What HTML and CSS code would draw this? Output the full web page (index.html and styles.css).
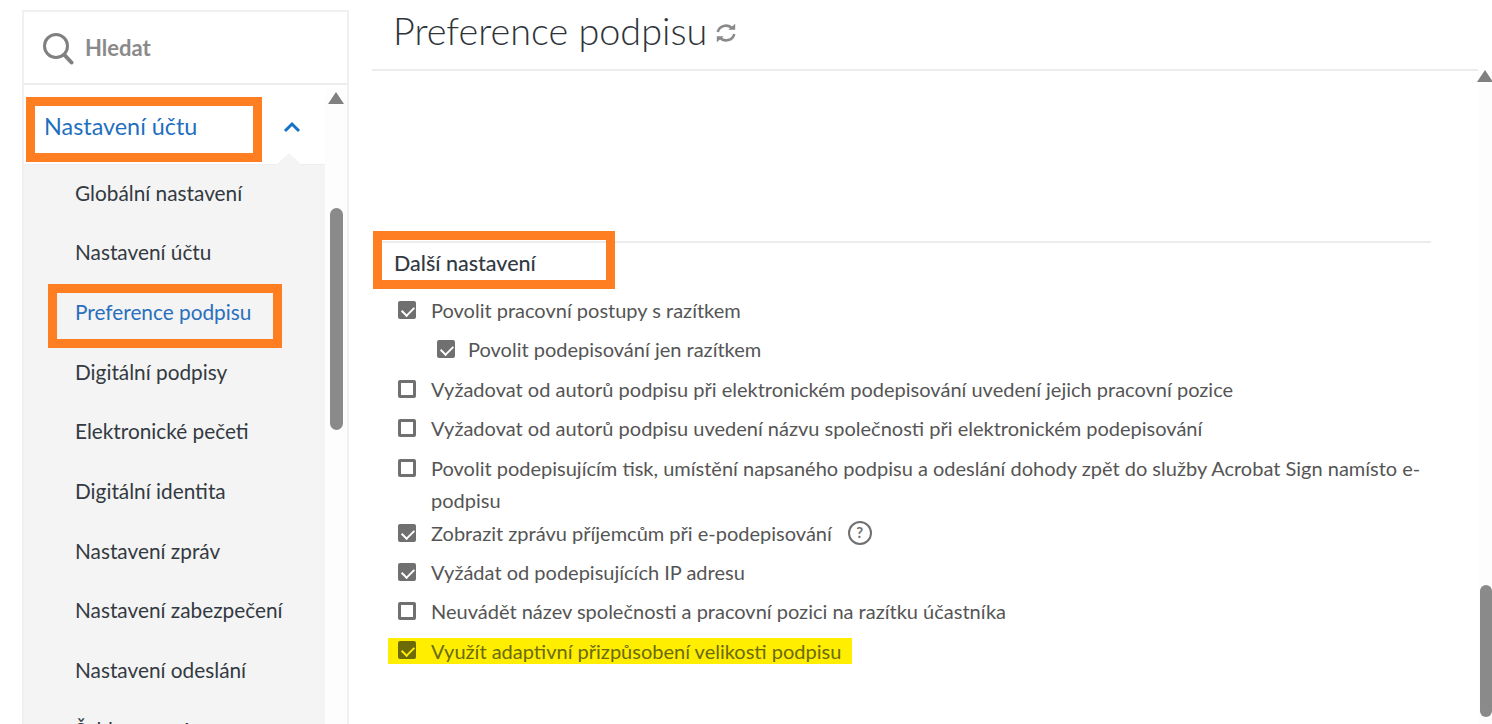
FILE: index.html
```html
<!DOCTYPE html>
<html lang="cs">
<head>
    <meta charset="UTF-8">
    <title>Preference podpisu</title>
    <link rel="stylesheet" href="styles.css">
</head>
<body>
    <aside class="sidebar">
        <div class="search">
            <svg class="search-icon" viewBox="0 0 32 34" fill="none" stroke="#808080">
                <circle cx="14" cy="14" r="11.5" stroke-width="3"/>
                <path d="M22.5 23 L29.5 30.5" stroke-width="4" stroke-linecap="round"/>
            </svg>
            <span>Hledat</span>
        </div>
        <div class="nav-wrap">
            <nav class="nav">
                <div class="nav-head">
                    <span class="nav-title">Nastavení účtu</span>
                    <svg class="chevron" viewBox="0 0 18 12" fill="none" stroke="#1473c8" stroke-width="3">
                        <path d="M2 10 L9 3 L16 10"/>
                    </svg>
                    <span class="mark mark-head"></span>
                </div>
                <ul class="nav-list">
                    <li>Globální nastavení</li>
                    <li>Nastavení účtu</li>
                    <li class="active">Preference podpisu<span class="mark mark-item"></span></li>
                    <li>Digitální podpisy</li>
                    <li>Elektronické pečeti</li>
                    <li>Digitální identita</li>
                    <li>Nastavení zpráv</li>
                    <li>Nastavení zabezpečení</li>
                    <li>Nastavení odeslání</li>
                    <li>Šablony zpráv</li>
                </ul>
            </nav>
            <div class="scrollbar side-scroll">
                <span class="arrow"></span>
                <span class="thumb"></span>
            </div>
        </div>
    </aside>

    <main class="content">
        <div class="content-body">
            <header class="page-head">
                <h1>Preference podpisu</h1>
                <svg class="refresh" viewBox="0 0 24 24" fill="none" stroke="#8a8a8a" stroke-width="2.8">
                    <path d="M3 11 A9 9 0 0 1 18.5 7"/>
                    <path d="M21 13 A9 9 0 0 1 5.5 17"/>
                    <path d="M14.5 8.5 H22 V2 Z" stroke="none" fill="#8a8a8a"/>
                    <path d="M9.5 15.5 H2 V22 Z" stroke="none" fill="#8a8a8a"/>
                </svg>
            </header>
            <section class="settings">
                <h2>Další nastavení<span class="mark mark-section"></span></h2>
                <ul class="options">
                    <li class="checked"><span class="box"></span><span>Povolit pracovní postupy s razítkem</span></li>
                    <li class="checked sub"><span class="box"></span><span>Povolit podepisování jen razítkem</span></li>
                    <li><span class="box"></span><span>Vyžadovat od autorů podpisu při elektronickém podepisování uvedení jejich pracovní pozice</span></li>
                    <li><span class="box"></span><span>Vyžadovat od autorů podpisu uvedení názvu společnosti při elektronickém podepisování</span></li>
                    <li class="wrapped"><span class="box"></span><span>Povolit podepisujícím tisk, umístění napsaného podpisu a odeslání dohody zpět do služby Acrobat Sign namísto e-podpisu</span></li>
                    <li class="checked"><span class="box"></span><span>Zobrazit zprávu příjemcům při e-podepisování</span><span class="help">?</span></li>
                    <li class="checked"><span class="box"></span><span>Vyžádat od podepisujících IP adresu</span></li>
                    <li><span class="box"></span><span>Neuvádět název společnosti a pracovní pozici na razítku účastníka</span></li>
                    <li class="checked highlight"><span class="box"></span><span>Využít adaptivní přizpůsobení velikosti podpisu</span></li>
                </ul>
            </section>
        </div>
        <div class="scrollbar main-scroll">
            <span class="arrow"></span>
            <span class="thumb"></span>
        </div>
    </main>
</body>
</html>
```

FILE: styles.css
```css
* {
    box-sizing: border-box;
    margin: 0;
    padding: 0;
}

html, body {
    width: 100%;
    height: 100%;
    overflow: hidden;
}

body {
    display: flex;
    background-color: white;
    color: #3c3c3c;
    font-family: Lato, "Noto Sans", sans-serif;
}

ul {
    list-style: none;
}

/* sidebar */

.sidebar {
    width: 327px;
    margin: 10px 0 0 22px;
    display: flex;
    flex-direction: column;
    flex-shrink: 0;
    border-left: 2px solid #f0f0f0;
    border-right: 2px solid #f0f0f0;
    border-top: 2px solid #f0f0f0;
}

.search {
    height: 77px;
    display: flex;
    align-items: center;
    gap: 10px;
    padding: 0 0 0 18px;
    border-bottom: 2px solid #ececec;
    color: #8a8a8a;
    font-size: 22px;
    font-weight: 700;
}

.search-icon {
    width: 32px;
    height: 34px;
    margin-top: 4px;
}

.search span {
    margin-left: 1px;
}

.nav-wrap {
    flex-grow: 1;
    display: flex;
    min-height: 0;
    margin-top: 4px;
}

.nav {
    width: 301px;
    flex-shrink: 0;
}

.nav-head {
    position: relative;
    height: 76px;
    display: flex;
    align-items: center;
    justify-content: space-between;
    padding: 0 24px 0 20px;
    border-bottom: 1px solid #eee;
}

.nav-title {
    color: #1f6fc0;
    font-size: 23.4px;
}

.chevron {
    width: 18px;
    height: 12px;
    margin-top: 1px;
}

.nav-head::after {
    content: "";
    position: absolute;
    right: 23px;
    bottom: -1px;
    border-left: 13px solid transparent;
    border-right: 13px solid transparent;
    border-bottom: 12px solid #f4f4f4;
}

.nav-list {
    background-color: #f4f4f4;
    height: 600px;
}

.nav-list li {
    position: relative;
    height: 59.7px;
    padding: 15px 0 0 51px;
    font-size: 20.8px;
    color: #333a42;
}

.nav-list li.active {
    color: #2a6fbd;
}

/* orange marks drawn over the screenshot */

.mark {
    position: absolute;
    border: 9px solid #ff7e21;
}

.mark-head {
    left: 2px;
    top: 8px;
    width: 236px;
    height: 65px;
}

.mark-item {
    left: 24px;
    top: 0;
    width: 234px;
    height: 64px;
}

.mark-section {
    left: -21px;
    top: -19px;
    width: 242px;
    height: 58px;
}

/* scrollbars */

.scrollbar {
    display: flex;
    flex-direction: column;
    align-items: center;
    background-color: #fdfdfd;
}

.arrow {
    width: 0;
    height: 0;
    border-left: 8px solid transparent;
    border-right: 8px solid transparent;
    border-bottom: 12px solid #808080;
}

.thumb {
    background-color: #8a8a8a;
    border-radius: 7px;
}

.side-scroll {
    width: 24px;
    padding-top: 3px;
}

.side-scroll .thumb {
    width: 13px;
    height: 222px;
    margin-top: 104px;
}

.main-scroll {
    width: 14px;
    margin-top: 70px;
}

.main-scroll .thumb {
    width: 12px;
    height: 132px;
    margin: 503px 0 0 2px;
}

/* main column */

.content {
    flex-grow: 1;
    min-width: 0;
    display: flex;
    margin-left: 23px;
}

.content-body {
    flex-grow: 1;
    min-width: 0;
}

.page-head {
    height: 71px;
    display: flex;
    align-items: center;
    gap: 8px;
    padding: 0 0 8px 21px;
    border-bottom: 2px solid #ececec;
}

h1 {
    font-size: 37.8px;
    font-weight: 300;
    color: #2e343a;
}

.refresh {
    width: 22px;
    height: 22px;
    margin-top: 5px;
}

.settings {
    margin: 170px 47px 0 1px;
    border-top: 2px solid #ececec;
}

h2 {
    position: relative;
    width: max-content;
    margin: 7px 0 0 21px;
    font-size: 21.5px;
    font-weight: 500;
    color: #333a42;
}

.options {
    margin-top: 18px;
    padding-left: 15px;
    font-size: 20px;
    color: #555;
}

.options li {
    display: flex;
    align-items: flex-start;
    gap: 15px;
    min-height: 39.4px;
    padding: 0 0 0 10px;
    line-height: 32px;
}

.options li.sub {
    padding-left: 49px;
    gap: 13px;
}

.options li.wrapped {
    min-height: 65px;
}

.box {
    position: relative;
    flex-shrink: 0;
    width: 18px;
    height: 18px;
    margin-top: 7px;
    border: 3px solid #707070;
    border-radius: 2px;
}

.checked .box {
    background-color: #707070;
}

.checked .box::after {
    content: "";
    position: absolute;
    left: 3px;
    top: 0;
    width: 6px;
    height: 10px;
    border: solid white;
    border-width: 0 2.5px 2.5px 0;
    transform: rotate(45deg);
}

.help {
    width: 24px;
    height: 24px;
    margin: 4px 0 0 1px;
    border: 2.5px solid #707070;
    border-radius: 50%;
    color: #707070;
    font-size: 15px;
    font-weight: 700;
    line-height: 19px;
    text-align: center;
}

.options li.highlight {
    width: max-content;
    min-height: 26px;
    margin-top: 3px;
    padding: 0 11px 0 10px;
    line-height: 26px;
    background-color: #ffee00;
    color: #6a6a10;
}

.highlight .box {
    margin-top: 3px;
    background-color: #6d6a08;
    border-color: #6d6a08;
}

.highlight .box::after {
    border-color: #ffee00;
}
```
